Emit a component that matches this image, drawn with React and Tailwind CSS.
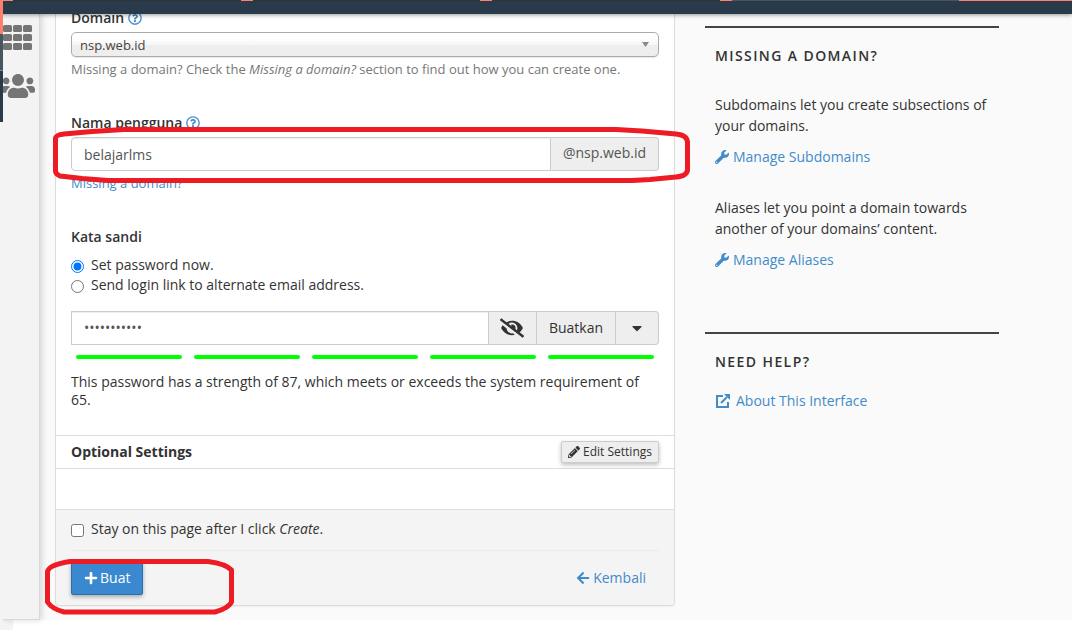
import { useState } from 'react';
import {
  FaArrowLeft,
  FaCaretDown,
  FaExternalLinkAlt,
  FaEyeSlash,
  FaPencilAlt,
  FaPlus,
  FaRegQuestionCircle,
  FaUsers,
  FaWrench,
} from 'react-icons/fa';

const STRENGTH_BARS = [1, 2, 3, 4, 5];
const COLUMNS = [0, 10, 20];
const ROWS = [0, 9, 18];

function GridIcon() {
  return (
    <svg width="29" height="26" viewBox="0 0 29 26" fill="currentColor" aria-hidden="true">
      {COLUMNS.map((x) => ROWS.map((y) => (
        <rect key={`${x}-${y}`} x={x} y={y} width="9" height="7" rx="1.5" />
      )))}
    </svg>
  );
}

function TopBar() {
  return (
    <header className="relative z-10 bg-[#293a4a] shadow-[0_1px_4px_rgba(0,0,0,0.4)]">
      <div className="flex h-px">
        <span className="w-[13px] bg-[#ff7f6e]" />
        <span className="flex-1 bg-[#2f3537]" />
        <span className="w-3 bg-[#ff7f6e]" />
        <span className="flex-1 bg-[#2f3537]" />
        <span className="w-3 bg-[#ff7f6e]" />
        <span className="flex-1 bg-[#2f3537]" />
        <span className="w-3 bg-[#ff7f6e]" />
        <span className="flex-1 bg-[#46565e]" />
        <span className="w-[113px] bg-[#ff7f6e]" />
      </div>
      <div className="flex h-[13px]">
        <span className="w-[3px] bg-[#ff7f6e]" />
      </div>
    </header>
  );
}

function Sidebar() {
  return (
    <>
      <div className="relative z-10 w-[3px] shrink-0 bg-[#f3f3f3]">
        <div className="h-5 bg-[#ff7f6e]" />
        <div className="h-9 bg-[#46565e]" />
        <div className="h-[52px] border-t border-[#7b8a92] bg-[#293a4a]" />
      </div>
      <nav className="z-[5] w-[37px] shrink-0 border-r border-b border-[#d9d9d9] bg-[#f3f3f3] text-[#757575] shadow-[2px_0_6px_rgba(0,0,0,0.15)]">
        <a href="#tools" aria-label="Tools" className="mt-[11px] block">
          <GridIcon />
        </a>
        <a href="#accounts" aria-label="Accounts" className="mt-5 flex justify-end overflow-hidden pr-1">
          <FaUsers className="h-[30px] w-[34px] shrink-0" />
        </a>
      </nav>
    </>
  );
}

function HelpButton({ label }) {
  return (
    <button type="button" aria-label={label} className="text-[#428bca]">
      <FaRegQuestionCircle className="size-3.5" />
    </button>
  );
}

function AccountForm() {
  const [mode, setMode] = useState('now');
  const [username, setUsername] = useState('belajarlms');
  const [password, setPassword] = useState('belajar2021');
  const [stay, setStay] = useState(false);

  return (
    <form className="relative -mt-[7px] min-w-0 flex-1 rounded-b border border-[#dcdcdc] bg-white shadow-[0_1px_1px_rgba(0,0,0,0.05)]" onSubmit={(e) => e.preventDefault()}>
      <div className="px-[15px] pb-[26px]">
        <div className="flex items-center gap-1 leading-5">
          <label htmlFor="domain" className="font-semibold">Domain</label>
          <HelpButton label="About domain" />
        </div>
        <div className="relative mt-1">
          <select
            id="domain"
            className="block h-[25px] w-full appearance-none rounded-[5px] border border-[#aaa] bg-linear-to-b from-white from-20% via-[#f6f6f6] via-50% to-[#eee] to-52% px-2 pt-0.5 text-[13px] text-[#444] shadow-[0_1px_1px_rgba(0,0,0,0.1)]"
          >
            <option>nsp.web.id</option>
          </select>
          <svg className="pointer-events-none absolute top-[10px] right-[10px]" width="7" height="5" viewBox="0 0 7 5" aria-hidden="true">
            <path d="M0 0h7L3.5 5z" fill="#888" />
          </svg>
        </div>
        <p className="mt-[3px] text-[13px] leading-[18px] text-[#777]">
          Missing a domain? Check the <i>Missing a domain?</i> section to find out how you can create one.
        </p>

        <div className="mt-[35px] flex items-center gap-1 leading-5">
          <label htmlFor="username" className="font-semibold">Nama pengguna</label>
          <HelpButton label="About username" />
        </div>
        <div className="mt-1 flex h-[34px]">
          <input
            id="username"
            value={username}
            onChange={(e) => setUsername(e.target.value)}
            className="min-w-0 flex-1 rounded-l border border-[#ccc] px-3 pt-0.5 text-[#555] shadow-[inset_0_1px_1px_rgba(0,0,0,0.075)]"
          />
          <span className="flex items-center rounded-r border border-l-0 border-[#ccc] bg-[#eee] px-3 pb-0.5 text-[#555]">@nsp.web.id</span>
        </div>
        <a href="#missing" className="mt-[3px] block text-[13px] leading-[18px] text-[#428bca]">Missing a domain?</a>

        <fieldset className="mt-[35px]">
          <legend className="leading-5 font-semibold">Kata sandi</legend>
          <label className="mt-2 flex items-center gap-[7px] leading-5">
            <input type="radio" name="mode" className="mt-0.5 size-[13px]" checked={mode === 'now'} onChange={() => setMode('now')} />
            Set password now.
          </label>
          <label className="flex items-center gap-[7px] leading-5">
            <input type="radio" name="mode" className="mt-0.5 size-[13px]" checked={mode === 'link'} onChange={() => setMode('link')} />
            Send login link to alternate email address.
          </label>
        </fieldset>

        <div className="mt-4 flex h-[34px]">
          <input
            type="password"
            aria-label="Kata sandi"
            value={password}
            onChange={(e) => setPassword(e.target.value)}
            className="min-w-0 flex-1 border border-[#ccc] px-3 text-[#555] shadow-[inset_0_1px_1px_rgba(0,0,0,0.075)]"
          />
          <button type="button" aria-label="Show password" className="flex w-12 items-center justify-center border-y border-r border-[#ccc] bg-[#eee]">
            <FaEyeSlash className="h-5 w-6" />
          </button>
          <button type="button" className="border-y border-r border-[#ccc] bg-[#eee] px-3">Buatkan</button>
          <button type="button" aria-label="Password options" className="flex w-[43px] items-center justify-center rounded-r-sm border-y border-r border-[#ccc] bg-[#eee]">
            <FaCaretDown className="size-4" />
          </button>
        </div>
        <div className="mt-2.5 flex gap-3 px-[5px]">
          {STRENGTH_BARS.map((bar) => (
            <span key={bar} className="h-1 flex-1 rounded-full bg-[#00ff00]" />
          ))}
        </div>
        <p className="mt-3.5 leading-[18px]">
          This password has a strength of 87, which meets or exceeds the system requirement of 65.
        </p>
      </div>

      <div className="flex h-[34px] items-center justify-between border-y border-[#ddd] px-[15px]">
        <h2 className="font-bold">Optional Settings</h2>
        <button type="button" className="flex h-[22px] items-center gap-[3px] rounded-xs border border-[#ccc] bg-[#eee] px-1.5 text-xs shadow-[0_2px_4px_rgba(0,0,0,0.25)]">
          <FaPencilAlt className="size-3" />
          Edit Settings
        </button>
      </div>
      <div className="h-10" />

      <div className="rounded-b border-t border-[#ddd] bg-[#f4f4f4] px-[15px] pt-[9px] pb-2.5">
        <label className="flex items-center gap-[7px] leading-5">
          <input type="checkbox" className="mt-0.5 size-[13px]" checked={stay} onChange={(e) => setStay(e.target.checked)} />
          <span>Stay on this page after I click <i>Create</i>.</span>
        </label>
        <div className="mt-[11px] flex items-center justify-between border-t border-[#ececec] pt-2.5">
          <button type="submit" className="flex h-[34px] items-center gap-0.5 rounded-xs border border-[#2a6fb0] bg-[#3a89d0] px-3 text-white shadow-[0_2px_4px_rgba(0,0,0,0.3)]">
            <FaPlus className="size-3.5" />
            Buat
          </button>
          <a href="#back" className="flex items-center gap-[3px] pr-[13px] text-[#428bca]">
            <FaArrowLeft className="size-3.5" />
            Kembali
          </a>
        </div>
      </div>
    </form>
  );
}

function HelpColumn() {
  return (
    <aside className="w-[294px] shrink-0 pt-3">
      <section className="h-[306px] border-t-2 border-[#444] px-2.5 pt-[17px] leading-[21px]">
        <h3 className="font-semibold tracking-widest">MISSING A DOMAIN?</h3>
        <p className="mt-7">Subdomains let you create subsections of your domains.</p>
        <a href="#subdomains" className="mt-2.5 flex items-center gap-1 text-[#428bca]">
          <FaWrench className="size-3.5" />
          Manage Subdomains
        </a>
        <p className="mt-[30px]">Aliases let you point a domain towards another of your domains’ content.</p>
        <a href="#aliases" className="mt-2.5 flex items-center gap-1 text-[#428bca]">
          <FaWrench className="size-3.5" />
          Manage Aliases
        </a>
      </section>
      <section className="border-t-2 border-[#444] px-2.5 pt-[17px] leading-[21px]">
        <h3 className="font-semibold tracking-widest">NEED HELP?</h3>
        <a href="#about" className="mt-[18px] flex items-center gap-1.5 pl-px text-[#428bca]">
          <svg className="size-3.5" viewBox="0 0 14 14" fill="none" stroke="currentColor" strokeWidth="2" aria-hidden="true">
            <path d="M7 2H1v11h11V8" />
            <path d="M5 9l6-6" />
            <path d="M8 0h6v6z" fill="currentColor" stroke="none" />
          </svg>
          About This Interface
        </a>
      </section>
    </aside>
  );
}

// Hand-drawn red marker loops over the username row and the submit button
function Markers() {
  return (
    <svg className="pointer-events-none absolute top-0 left-0 z-20" width="700" height="630" fill="none" stroke="#ed1c24" strokeWidth="5" strokeLinejoin="round" aria-hidden="true">
      <path d="M124 129.500H616L642 131L676 134Q687 135 687.500 142V170Q687 176 676 177L650 179.500L632 180.500H108L82 178.500L60 176Q55.500 174 55.500 171V138Q56 135 64 134L92 131.500Z" />
      <path d="M70 561.500H208Q226 564 231.500 570V602Q229 608 215 612H64Q52 609 47.500 602V572Q48 565 70 561.500Z" />
    </svg>
  );
}

export default function App() {
  return (
    <div className="relative flex min-h-screen flex-col overflow-hidden bg-white font-['Open_Sans',sans-serif] text-sm text-[#333]">
      <TopBar />
      <div className="flex bg-[#fafafa]">
        <Sidebar />
        <main className="flex min-w-0 flex-1 items-start gap-[30px] pr-[73px] pb-3.5 pl-[15px]">
          <AccountForm />
          <HelpColumn />
        </main>
      </div>
      <div className="w-[13px] flex-1 bg-[#f3f3f3]" />
      <Markers />
    </div>
  );
}
